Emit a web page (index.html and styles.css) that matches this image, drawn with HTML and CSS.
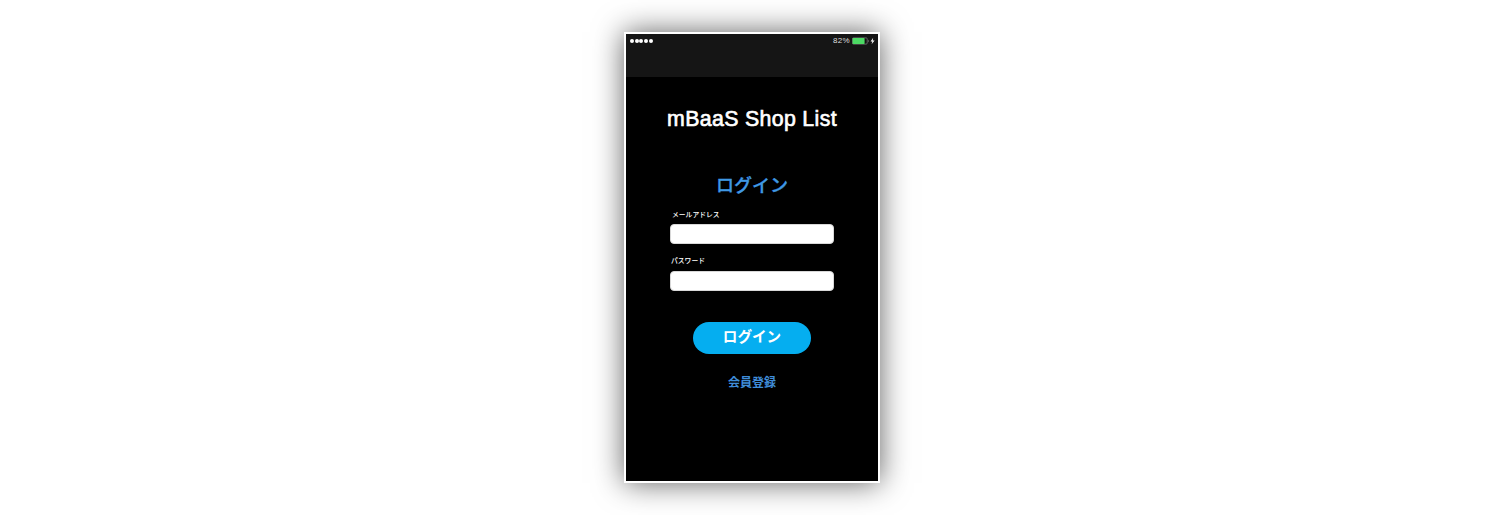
FILE: index.html
```
<!DOCTYPE html>
<html lang="ja">
<head>
<meta charset="utf-8">
<title>mBaaS Shop List</title>
<link rel="stylesheet" href="styles.css">
</head>
<body>
<main class="phone">
  <header class="bar">
    <div class="signal"><i></i><i></i><i></i><i></i><i></i></div>
    <div class="power">
      <span class="percent">82%</span>
      <svg class="battery" width="23" height="8" viewBox="0 0 23 8">
        <rect x=".4" y=".9" width="14.8" height="6.2" rx="1" fill="#111" stroke="#999" stroke-width=".6"/>
        <rect x=".6" y="1.1" width="12" height="5.8" rx=".7" fill="#4cd964"/>
        <path d="M16 2.6q1.2 1.4 0 2.8z" fill="#aaa"/>
        <path d="M21.2.8 18.6 4.4h1.8L19.6 7.2 22.6 3.4h-1.9z" fill="#fff"/>
      </svg>
    </div>
  </header>
  <h1 class="title">mBaaS Shop List</h1>
  <h2 class="subtitle">ログイン</h2>
  <form class="form">
    <label class="label" for="mail">メールアドレス</label>
    <input class="field" id="mail" type="email">
    <label class="label label-pass" for="pass">パスワード</label>
    <input class="field" id="pass" type="password">
    <button class="login" type="button">ログイン</button>
  </form>
  <a class="register">会員登録</a>
</main>
</body>
</html>
```
FILE: styles.css
```
* { box-sizing: border-box; }
body {
  margin: 0;
  height: 515px;
  display: flex;
  justify-content: center;
  align-items: flex-start;
  padding-top: 32px;
  background: #fff;
  overflow: hidden;
  font-family: "Liberation Sans", "Noto Sans CJK JP", sans-serif;
}
.phone {
  width: 256px;
  height: 451px;
  border: 2px solid #fff;
  background: #000;
  box-shadow: 0 0 28px rgba(0, 0, 0, .62);
  display: flex;
  flex-direction: column;
  align-items: center;
}
.bar {
  width: 100%;
  height: 43px;
  padding: 2px 3px 0 4px;
  background: #151515;
  display: flex;
  justify-content: space-between;
  align-items: flex-start;
}
.signal { display: flex; gap: .7px; padding-top: 3px; }
.signal i { width: 4px; height: 4px; border-radius: 50%; background: #fff; }
.power { display: flex; align-items: center; gap: 2px; height: 10px; }
.percent { font-size: 8px; line-height: 10px; color: #ddd; letter-spacing: .3px; }
.battery { display: block; }
.title {
  margin: 28px 0 0;
  font-size: 21.3px;
  line-height: 28px;
  font-weight: 400;
  letter-spacing: .35px;
  color: #fff;
  -webkit-text-stroke: .65px #fff;
  white-space: nowrap;
}
.subtitle {
  margin: 40px 0 0;
  font-size: 18px;
  line-height: 26px;
  font-weight: 500;
  color: #3f98e4;
  -webkit-text-stroke: .3px #3f98e4;
}
.form { width: 164px; margin-top: 11px; display: flex; flex-direction: column; }
.label {
  height: 10px;
  margin: 0 0 4.4px 2px;
  font-size: 6.8px;
  line-height: 10px;
  font-weight: 500;
  color: #fff;
}
.label-pass { margin: 11.6px 0 5.4px 1px; }
.field {
  width: 164px;
  height: 20px;
  padding: 0 6px;
  border: 1px solid #d8d8d8;
  border-radius: 4px;
  background: #fff;
  outline: none;
}
.login {
  align-self: center;
  width: 118px;
  height: 32px;
  margin-top: 31px;
  padding: 0 0 4px;
  border: 0;
  border-radius: 16px;
  background: #05aef0;
  color: #fff;
  font: 700 14.6px/28px "Noto Sans CJK JP", sans-serif;
}
.register {
  margin-top: 20px;
  font-size: 12px;
  line-height: 18px;
  font-weight: 700;
  color: #3f8cd8;
}
```
